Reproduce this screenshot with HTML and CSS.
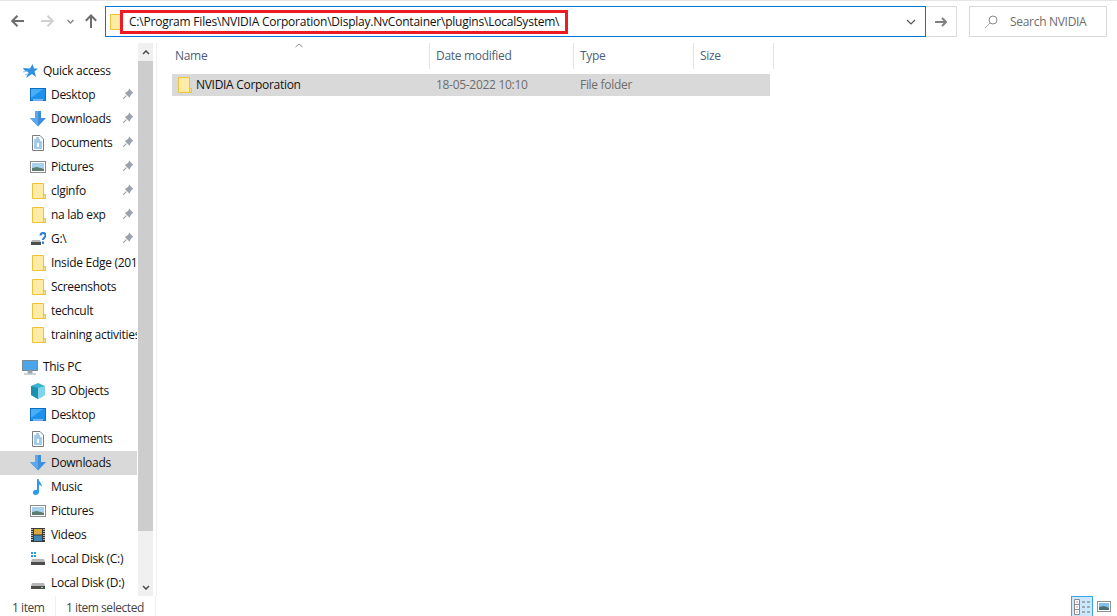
FILE: index.html
```html
<!DOCTYPE html>
<html lang="en">
<head>
<meta charset="utf-8">
<title>NVIDIA</title>
<link rel="stylesheet" href="styles.css">
</head>
<body>
<svg class="defs" width="0" height="0" aria-hidden="true">
  <symbol id="folder" viewBox="0 0 16 16">
    <path d="M2.500 .5H13.500V15.500H2.500Z" fill="#fde38a" stroke="#ecc238"/>
    <path d="M3 1H13V15H3Z" fill="#feeba6"/>
    <path d="M13.500 11.500H15.500V15.500H13.500Z" fill="#fde38a" stroke="#ecc238"/>
  </symbol>
  <symbol id="desktop" viewBox="0 0 16 16">
    <rect x=".5" y="1.500" width="15" height="12" fill="#1e90ee" stroke="#0f6fc6"/>
    <path d="M1 2H13L1 11Z" fill="#49aef5"/>
    <path d="M3 13H13" stroke="#cfe8fb"/>
  </symbol>
  <symbol id="down" viewBox="0 0 16 16">
    <path d="M5 0H11V7H16L8 15.500L0 7H5Z" fill="#3d8fdc"/>
    <path d="M5 0H8V15L0 7H5Z" fill="#5aa9ea"/>
  </symbol>
  <symbol id="doc" viewBox="0 0 16 16">
    <path d="M2.500 .5H10L13.500 4V15.500H2.500Z" fill="#fff" stroke="#7d7d7d"/>
    <path d="M6 3H9M4 5H10M4 7H12M4 9H7M9 9H12M4 11H7M9 11H12M4 13H12" stroke="#3f97dc"/>
  </symbol>
  <symbol id="pic" viewBox="0 0 16 16">
    <rect x=".5" y="2.500" width="15" height="11" fill="#fff" stroke="#8c8c8c"/>
    <rect x="2" y="4" width="12" height="8" fill="#a9d2ef"/>
    <path d="M2 9L7 8L14 10V12H2Z" fill="#5d7d70"/>
  </symbol>
  <symbol id="drive" viewBox="0 0 16 16">
    <path d="M2 8H14L15 11V14H1V11Z" fill="#b5b5b5"/>
    <rect x="1" y="11" width="14" height="3" fill="#4d4d4d"/>
    <rect x="11" y="12" width="2" height="1" fill="#7fe07f"/>
  </symbol>
  <symbol id="pin" viewBox="0 0 11 11">
    <path d="M6.500 .5L10.500 4.500L9 5L7.500 7.500L7 9L2.500 4.500L4 4L6 2Z" fill="#9aa3ab"/>
    <path d="M4 7L1 10" stroke="#9aa3ab"/>
  </symbol>
</svg>

<header class="toolbar">
  <div class="nav-buttons">
    <svg class="nav-icon back" viewBox="0 0 13 12"><path d="M1 6H13M6.500 .8L1.200 6L6.500 11.200" fill="none" stroke="#6d6d6d" stroke-width="2"/></svg>
    <svg class="nav-icon forward" viewBox="0 0 13 12"><path d="M0 6H12M6.500 .8L11.800 6L6.500 11.200" fill="none" stroke="#d0d0d0" stroke-width="2"/></svg>
    <svg class="nav-caret" viewBox="0 0 7 5"><path d="M.5 1L3.500 4L6.500 1" fill="none" stroke="#858585" stroke-width="1.400"/></svg>
    <svg class="nav-icon up" viewBox="0 0 12 14"><path d="M6 14V1.500M.8 6.800L6 1.500L11.200 6.800" fill="none" stroke="#6d6d6d" stroke-width="2"/></svg>
  </div>
  <div class="address">
    <svg class="address-folder" viewBox="2 0 10 16"><use href="#folder" width="16" height="16"/></svg>
    <div class="path">C:\Program Files\NVIDIA Corporation\Display.NvContainer\plugins\LocalSystem\</div>
    <svg class="address-caret" viewBox="0 0 10 6"><path d="M1 1L5 5L9 1" fill="none" stroke="#555" stroke-width="1.200"/></svg>
  </div>
  <div class="go">
    <svg class="go-icon" viewBox="0 0 12 10"><path d="M0 5H11M7 1L11 5L7 9" fill="none" stroke="#808080" stroke-width="2"/></svg>
  </div>
  <div class="search">
    <svg class="search-icon" viewBox="0 0 14 14"><circle cx="9" cy="5" r="4" fill="none" stroke="#8a8a8a"/><path d="M6 8L1 13" stroke="#a8a8a8"/></svg>
    <span>Search NVIDIA</span>
  </div>
</header>

<main class="main">
  <aside class="sidebar">
    <nav class="tree">
      <div class="row root"><svg class="ico" viewBox="0 0 16 16"><path d="M10.500 1L12 5.500H16L12.500 8.500L14 14L10 11L4 15L6.500 9.500L2 7L1 5L8 5.500Z" fill="#2f8fe0"/><path d="M1 9L6 8M3 12L7 10" stroke="#8cc4f0"/></svg><span>Quick access</span></div>
      <div class="row"><svg class="ico"><use href="#desktop"/></svg><span>Desktop</span><svg class="pin"><use href="#pin"/></svg></div>
      <div class="row"><svg class="ico"><use href="#down"/></svg><span>Downloads</span><svg class="pin"><use href="#pin"/></svg></div>
      <div class="row"><svg class="ico"><use href="#doc"/></svg><span>Documents</span><svg class="pin"><use href="#pin"/></svg></div>
      <div class="row"><svg class="ico"><use href="#pic"/></svg><span>Pictures</span><svg class="pin"><use href="#pin"/></svg></div>
      <div class="row"><svg class="ico"><use href="#folder"/></svg><span>clginfo</span><svg class="pin"><use href="#pin"/></svg></div>
      <div class="row"><svg class="ico"><use href="#folder"/></svg><span>na lab exp</span><svg class="pin"><use href="#pin"/></svg></div>
      <div class="row"><svg class="ico" viewBox="0 0 16 16"><path d="M2 9H10L11 11V14H1V11Z" fill="#b5b5b5"/><rect x="1" y="11" width="10" height="3" fill="#4d4d4d"/><path d="M10.500 4.500C10.500 1 15.500 1 15.500 4.500C15.500 6.500 13 6.500 13 9M13 10.500V13" fill="none" stroke="#2c7fd0" stroke-width="2"/></svg><span>G:\</span><svg class="pin"><use href="#pin"/></svg></div>
      <div class="row"><svg class="ico"><use href="#folder"/></svg><span class="clip">Inside Edge (2019)</span></div>
      <div class="row"><svg class="ico"><use href="#folder"/></svg><span>Screenshots</span></div>
      <div class="row"><svg class="ico"><use href="#folder"/></svg><span>techcult</span></div>
      <div class="row"><svg class="ico"><use href="#folder"/></svg><span class="clip">training activities</span></div>
      <div class="row root group"><svg class="ico" viewBox="0 0 16 16"><rect x=".5" y="1.500" width="15" height="10" fill="#4aa6e8" stroke="#7d8b96"/><path d="M6 12H10V14H6ZM2 15H14" fill="#9aa5ad" stroke="#9aa5ad"/></svg><span>This PC</span></div>
      <div class="row"><svg class="ico" viewBox="0 0 16 16"><path d="M8 0L15 3V12L8 16L1 12V3Z" fill="#3bb3cf"/><path d="M8 5L15 3V12L8 16Z" fill="#7fd6ea"/><path d="M1 3L8 5V16L1 12Z" fill="#1e8fae"/></svg><span>3D Objects</span></div>
      <div class="row"><svg class="ico"><use href="#desktop"/></svg><span>Desktop</span></div>
      <div class="row"><svg class="ico"><use href="#doc"/></svg><span>Documents</span></div>
      <div class="row selected"><svg class="ico"><use href="#down"/></svg><span>Downloads</span></div>
      <div class="row"><svg class="ico" viewBox="0 0 16 16"><path d="M7 0H8.500C9 3 12 4 12 8C11.500 6.500 10 6 9 5.500V13C9 15 7 16 5.500 16C3.500 16 2.500 14.500 3 13C3.500 11.500 5.500 10.500 7 11Z" fill="#2b9bf0"/></svg><span>Music</span></div>
      <div class="row"><svg class="ico"><use href="#pic"/></svg><span>Pictures</span></div>
      <div class="row"><svg class="ico" viewBox="0 0 16 16"><rect x="1" y="1" width="14" height="14" fill="#3a3a3a"/><path d="M2 2V14M14 2V14" stroke="#ddd" stroke-dasharray="1 1" stroke-width="1.500"/><rect x="4" y="2" width="8" height="5.500" fill="#d9a93c"/><rect x="4" y="8.500" width="8" height="5.500" fill="#3d86b5"/></svg><span>Videos</span></div>
      <div class="row"><svg class="ico" viewBox="0 0 16 16"><path d="M1 1H3V3H1ZM4 1H6V3H4ZM1 4H3V6H1ZM4 4H6V6H4Z" fill="#2a9be8"/><path d="M2 8H14L15 11V14H1V11Z" fill="#b5b5b5"/><rect x="1" y="11" width="14" height="3" fill="#4d4d4d"/></svg><span>Local Disk (C:)</span></div>
      <div class="row"><svg class="ico"><use href="#drive"/></svg><span>Local Disk (D:)</span></div>
    </nav>
    <div class="scrollbar">
      <div class="scroll-btn"><svg viewBox="0 0 8 5"><path d="M1 4L4 1L7 4" fill="none" stroke="#505050" stroke-width="1.600"/></svg></div>
      <div class="thumb"></div>
      <div class="track"></div>
      <div class="scroll-btn"><svg viewBox="0 0 8 5"><path d="M1 1L4 4L7 1" fill="none" stroke="#505050" stroke-width="1.600"/></svg></div>
    </div>
  </aside>

  <section class="files">
    <div class="head">
      <div class="col name">Name<svg class="sort" viewBox="0 0 8 5"><path d="M.5 4L4 1L7.500 4" fill="none" stroke="#8a8a8a"/></svg></div>
      <div class="col date">Date modified</div>
      <div class="col type">Type</div>
      <div class="col size">Size</div>
    </div>
    <div class="file">
      <div class="cell cell-name"><svg class="ico"><use href="#folder"/></svg><span>NVIDIA Corporation</span></div>
      <div class="cell cell-date">18-05-2022 10:10</div>
      <div class="cell cell-type">File folder</div>
    </div>
  </section>
</main>

<footer class="status">
  <span class="count">1 item</span>
  <span class="count chosen">1 item selected</span>
  <div class="views">
    <div class="view active"><svg viewBox="0 0 20 20"><path d="M2.500 2.500H7.500V17.500H2.500ZM2.500 7.500H7.500M2.500 12.500H7.500" fill="#fff" stroke="#8a8a8a"/><path d="M4.500 4.500H5.500V5.500H4.500ZM4.500 9.500H5.500V10.500H4.500ZM4.500 14.500H5.500V15.500H4.500Z" fill="#b03030"/><path d="M10 5H13M15 5H18M10 10H13M15 10H18M10 15H13M15 15H18" stroke="#6d6d6d" stroke-width="1.200"/></svg></div>
    <div class="view plain"><svg viewBox="0 0 14 11"><rect x=".5" y=".5" width="13" height="10" fill="#fff" stroke="#909090"/><rect x="2" y="2" width="10" height="7" fill="#7fc0ec"/><path d="M2 6L7 5L12 7V9H2Z" fill="#4f6e70"/></svg></div>
  </div>
</footer>
</body>
</html>
```
FILE: styles.css
```css
* { box-sizing: border-box; }
html, body { margin: 0; height: 100%; }
body {
  width: 1117px;
  height: 616px;
  overflow: hidden;
  background: #fff;
  color: #000;
  font-family: "Open Sans", "Noto Sans", sans-serif;
  font-size: 12px;
  letter-spacing: -.3px;
  display: flex;
  flex-direction: column;
  border-top: 1px solid #e6e6e6;
}
.defs { position: absolute; }

.toolbar {
  height: 42px;
  display: flex;
  align-items: flex-start;
  padding-top: 5px;
  flex: none;
}
.nav-buttons {
  width: 105px;
  height: 30px;
  display: flex;
  align-items: center;
  padding-left: 11px;
  flex: none;
}
.nav-icon { display: block; }
.back { width: 13px; height: 12px; }
.forward { width: 13px; height: 12px; margin-left: 17px; }
.nav-caret { width: 7px; height: 5px; margin-left: 13px; }
.up { width: 12px; height: 14px; margin-left: 11px; }

.address {
  width: 821px;
  height: 31px;
  border: 1px solid #0078d7;
  display: flex;
  align-items: center;
  padding-left: 4px;
  flex: none;
}
.address-folder { width: 10px; height: 16px; flex: none; }
.path {
  width: 448px;
  height: 24px;
  border: 3px solid #ed1c24;
  padding-left: 6px;
  line-height: 17px;
  letter-spacing: -.22px;
  white-space: nowrap;
  flex: none;
  color: #111;
}
.address-caret { width: 10px; height: 6px; margin-left: auto; margin-right: 9px; }
.go {
  width: 31px;
  height: 31px;
  border: 1px solid #d9d9d9;
  border-left: none;
  display: flex;
  align-items: center;
  justify-content: center;
  flex: none;
}
.go-icon { width: 12px; height: 10px; }
.search {
  width: 138px;
  height: 31px;
  margin-left: 12px;
  border: 1px solid #d9d9d9;
  display: flex;
  align-items: center;
  padding-left: 14px;
  color: #6d6d6d;
  flex: none;
}
.search-icon { width: 14px; height: 14px; margin-right: 12px; }

.main { flex: 1; display: flex; min-height: 0; }
.sidebar {
  width: 157px;
  display: flex;
  border-right: 1px solid #f0f0f0;
  flex: none;
  overflow: hidden;
}
.tree {
  width: 138px;
  padding-top: 16px;
  overflow: hidden;
  flex: none;
}
.row {
  height: 24px;
  width: 137px;
  display: flex;
  align-items: center;
  padding-left: 30px;
  position: relative;
  white-space: nowrap;
  color: #111;
}
.row .ico { width: 16px; height: 16px; flex: none; margin-right: 5px; }
.row span { margin-bottom: 2px; }
.row .clip { min-width: 0; overflow: hidden; }
.row.root { padding-left: 22px; }
.row.group { margin-top: 8px; }
.row.selected { background: #d9d9d9; }
.row .pin { width: 12px; height: 12px; position: absolute; left: 122px; top: 5px; }
.scrollbar {
  width: 15px;
  display: flex;
  flex-direction: column;
  background: #f0f0f0;
  flex: none;
}
.scroll-btn {
  height: 18px;
  display: flex;
  align-items: center;
  justify-content: center;
  flex: none;
}
.scroll-btn svg { width: 8px; height: 5px; }
.thumb { height: 470px; background: #cdcdcd; flex: none; }
.track { flex: 1; background: #f0f0f0; }

.files { flex: 1; padding-left: 15px; min-width: 0; }
.head {
  height: 26px;
  display: flex;
  color: #4c607a;
  line-height: 26px;
}
.col {
  position: relative;
  border-right: 1px solid #e5e5e5;
  padding-left: 3px;
  flex: none;
}
.col.name { width: 258px; }
.col.date { width: 144px; padding-left: 6px; }
.col.type { width: 120px; padding-left: 6px; }
.col.size { width: 80px; padding-left: 6px; }
.sort { position: absolute; left: 123px; top: 0; width: 8px; height: 5px; }
.file {
  width: 598px;
  height: 22px;
  margin-top: 5px;
  background: #d9d9d9;
  display: flex;
  align-items: center;
  color: #6d6d6d;
}
.cell { flex: none; white-space: nowrap; margin-bottom: 1px; }
.cell-name { width: 264px; display: flex; align-items: center; padding-left: 4px; color: #111; }
.cell-name .ico { width: 16px; height: 16px; margin-right: 4px; flex: none; margin-top: 1px; }
.cell-date { width: 144px; }
.cell-type { width: 120px; }

.status {
  height: 20px;
  flex: none;
  display: flex;
  align-items: center;
  color: #444;
}
.count {
  width: 56px;
  height: 20px;
  padding-left: 12px;
  border-right: 1px solid #f0f0f0;
  line-height: 23px;
  letter-spacing: -.45px;
  white-space: nowrap;
}
.chosen { width: 100px; padding-left: 10px; }
.views { margin-left: auto; display: flex; align-items: flex-start; height: 20px; padding-right: 6px; }
.view { display: flex; align-items: center; justify-content: center; }
.view svg { width: 14px; height: 11px; display: block; }
.view.plain { width: 14px; height: 11px; margin-top: 5px; }
.view.active { width: 22px; height: 22px; border: 1px solid #3ba5e8; background: #cce8ff; margin-right: 4px; }
.view.active svg { width: 20px; height: 20px; }
```
